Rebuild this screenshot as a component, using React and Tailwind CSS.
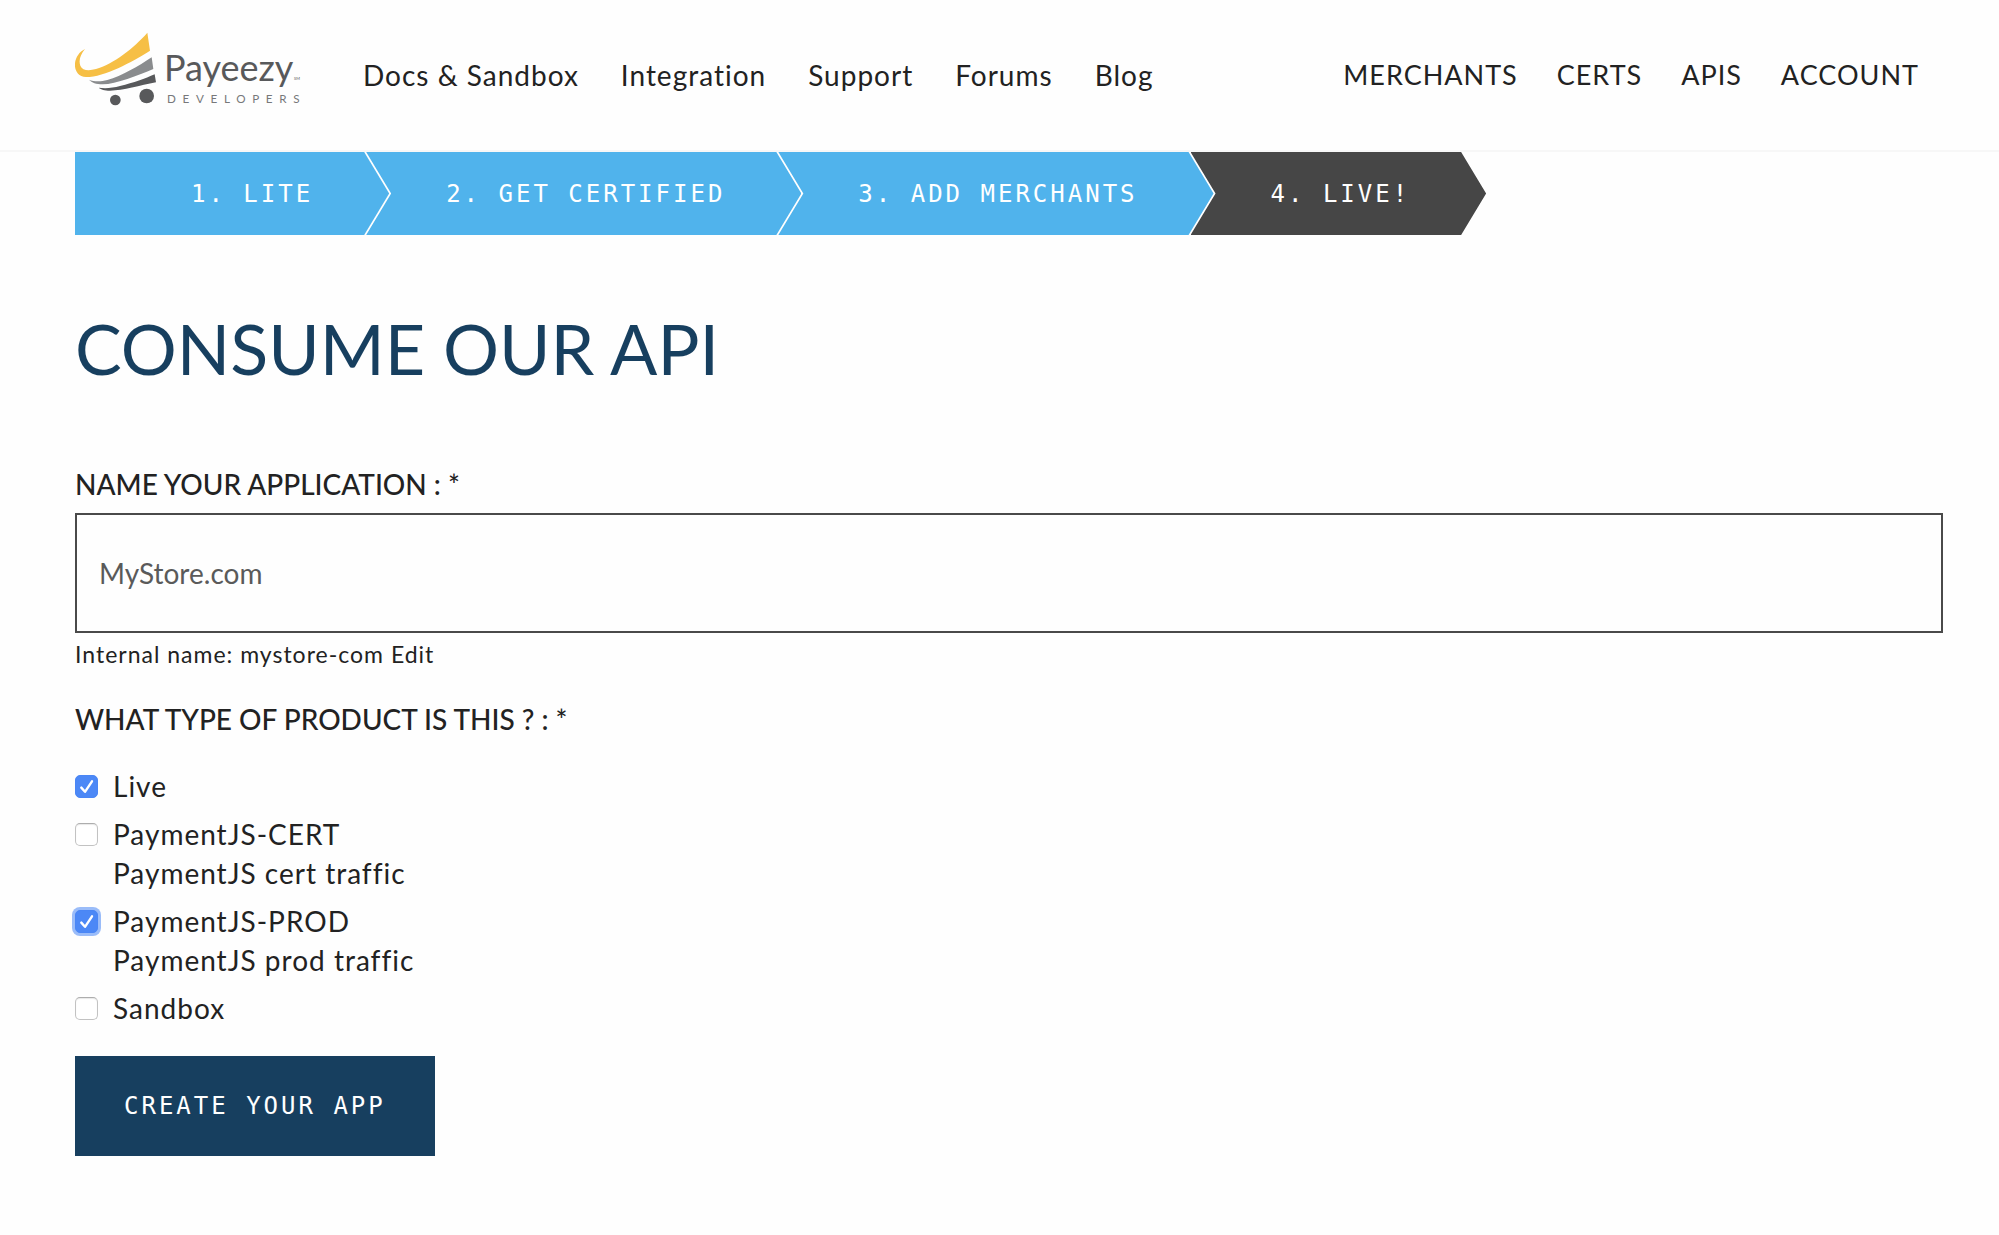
import { useState } from 'react';
import clsx from 'clsx';

const mainLinks = ['Docs & Sandbox', 'Integration', 'Support', 'Forums', 'Blog'];
const accountLinks = ['Merchants', 'Certs', 'APIs', 'Account'];
const steps = ['1. Lite', '2. Get Certified', '3. Add Merchants', '4. Live!'];

const products = [
  { id: 'live', name: 'Live' },
  { id: 'paymentjs-cert', name: 'PaymentJS-CERT', description: 'PaymentJS cert traffic' },
  { id: 'paymentjs-prod', name: 'PaymentJS-PROD', description: 'PaymentJS prod traffic' },
  { id: 'sandbox', name: 'Sandbox' },
];

function Logo() {
  return (
    <svg className="h-[77px] w-[240px]" viewBox="45 30 720 231" role="img" aria-label="Payeezy Developers">
      <path fill="#f6bf45" d="M262 38 L270 92 C215 126 135 171 78 171 C52 171 43 148 45 130 C47 112 58 95 75 87 C62 103 55 120 61 137 C67 152 86 153 108 147 C160 132 222 84 262 38 Z" />
      <path fill="#8a8c8e" d="M275 112 L280 147 C235 165 168 193 128 193 C108 193 96 188 87 179 C100 184 120 186 142 180 C186 168 236 138 275 112 Z" />
      <path fill="#58595b" d="M284 163 L288 187 C240 196 190 212 150 212 C133 212 124 209 116 203 C136 206 158 204 180 198 C222 188 255 176 284 163 Z" />
      <circle cx="166" cy="240" r="16" fill="#58595b" />
      <circle cx="260" cy="228" r="22" fill="#58595b" />
      <text x="312" y="183" fontSize="108" fill="#58595b" className="font-[Lato,sans-serif] tracking-normal">Payeezy</text>
      <text x="702" y="181" fontSize="12" fill="#58595b" className="font-[Lato,sans-serif] tracking-normal">SM</text>
      <text x="321" y="250" fontSize="35" letterSpacing="20" fill="#77787a" className="font-[Lato,sans-serif]">DEVELOPERS</text>
    </svg>
  );
}

function Header() {
  return (
    <header className="flex h-[152px] items-center border-b-2 border-[#f7f7f7] pr-20 pl-[75px] tracking-[1px]">
      <a href="#home" className="mr-12 shrink-0 pb-3.5">
        <Logo />
      </a>
      <nav className="flex gap-[42px] text-[28px] whitespace-nowrap">
        {mainLinks.map((link) => (
          <a key={link} href="#docs">{link}</a>
        ))}
      </nav>
      <nav className="ml-auto flex gap-[39px] text-[27px] whitespace-nowrap uppercase">
        {accountLinks.map((link) => (
          <a key={link} href="#account">{link}</a>
        ))}
      </nav>
    </header>
  );
}

function Steps() {
  return (
    <ol className="flex font-['DejaVu_Sans_Mono',monospace] text-2xl tracking-[3px] whitespace-nowrap text-white uppercase">
      {steps.map((step, index) => (
        <li
          key={step}
          className={clsx(
            'flex h-[83px] items-center pr-[76px]',
            index === 0
              ? 'pl-[116px] [clip-path:polygon(0_0,calc(100%-25px)_0,100%_50%,calc(100%-25px)_100%,0_100%)]'
              : '-ml-[23px] pl-20 [clip-path:polygon(0_0,calc(100%-25px)_0,100%_50%,calc(100%-25px)_100%,0_100%,25px_50%)]',
            index === steps.length - 1 ? 'bg-[#464646]' : 'bg-[#50b3ec]'
          )}
        >
          {step}
        </li>
      ))}
    </ol>
  );
}

function ProductOption({ product, checked, focused, onChange }) {
  return (
    <div className="flex gap-[15px]">
      <span className="mt-2 grid h-[23px] w-[23px] shrink-0">
        <input
          id={product.id}
          type="checkbox"
          checked={checked}
          onChange={onChange}
          className={clsx(
            'col-start-1 row-start-1 appearance-none rounded-[5px] border',
            checked ? 'border-[#4a86f5] bg-[#4c88f6]' : 'border-[#c2c2c2] border-t-[#adadad] bg-white shadow-[inset_0_1px_1px_#e8e8e8]',
            focused && 'ring-3 ring-[#9abcf9]'
          )}
        />
        {checked && (
          <svg className="pointer-events-none col-start-1 row-start-1" viewBox="0 0 23 23" fill="none" stroke="white" strokeWidth="2.4" strokeLinecap="round" strokeLinejoin="round">
            <path d="M6.3 12.6 L10 16.8 L17 6.3" />
          </svg>
        )}
      </span>
      <div className="leading-[39px]">
        <label htmlFor={product.id} className="block">{product.name}</label>
        {product.description && <p>{product.description}</p>}
      </div>
    </div>
  );
}

export default function App() {
  const [name, setName] = useState('MyStore.com');
  const [selected, setSelected] = useState(['live', 'paymentjs-prod']);

  const toggle = (id) => {
    setSelected((current) => (current.includes(id) ? current.filter((item) => item !== id) : [...current, id]));
  };

  return (
    <div className="min-h-screen bg-[#fefefe] font-[Lato,sans-serif] text-[#222222]">
      <Header />
      <main className="pr-14 pb-20 pl-[75px]">
        <Steps />
        <h1 className="mt-[69px] text-[70px] leading-[88px] text-[#173f5f] uppercase">Consume our API</h1>

        <form onSubmit={(event) => event.preventDefault()}>
          <label htmlFor="app-name" className="mt-[72px] block text-[28px] leading-[40px] font-medium uppercase">
            Name your application : *
          </label>
          <input
            id="app-name"
            type="text"
            value={name}
            onChange={(event) => setName(event.target.value)}
            className="mt-[9px] block h-[120px] w-full border-2 border-[#4a4a4a] px-[22px] text-[28px] text-[#5a5a5a] outline-none"
          />
          <p className="mt-1 text-[23px] leading-[34px] tracking-[1px]">
            Internal name: mystore-com <a href="#edit">Edit</a>
          </p>

          <fieldset className="mt-7">
            <legend className="text-[28px] leading-[40px] font-medium uppercase">What type of product is this ? : *</legend>
            <div className="mt-7 flex flex-col gap-[9px] text-[28px] tracking-[1px]">
              {products.map((product) => (
                <ProductOption
                  key={product.id}
                  product={product}
                  checked={selected.includes(product.id)}
                  focused={product.id === 'paymentjs-prod'}
                  onChange={() => toggle(product.id)}
                />
              ))}
            </div>
          </fieldset>

          <button
            type="submit"
            className="mt-7 h-[100px] bg-[#173f5f] px-[49px] font-['DejaVu_Sans_Mono',monospace] text-2xl tracking-[3px] text-white uppercase"
          >
            Create your app
          </button>
        </form>
      </main>
    </div>
  );
}
